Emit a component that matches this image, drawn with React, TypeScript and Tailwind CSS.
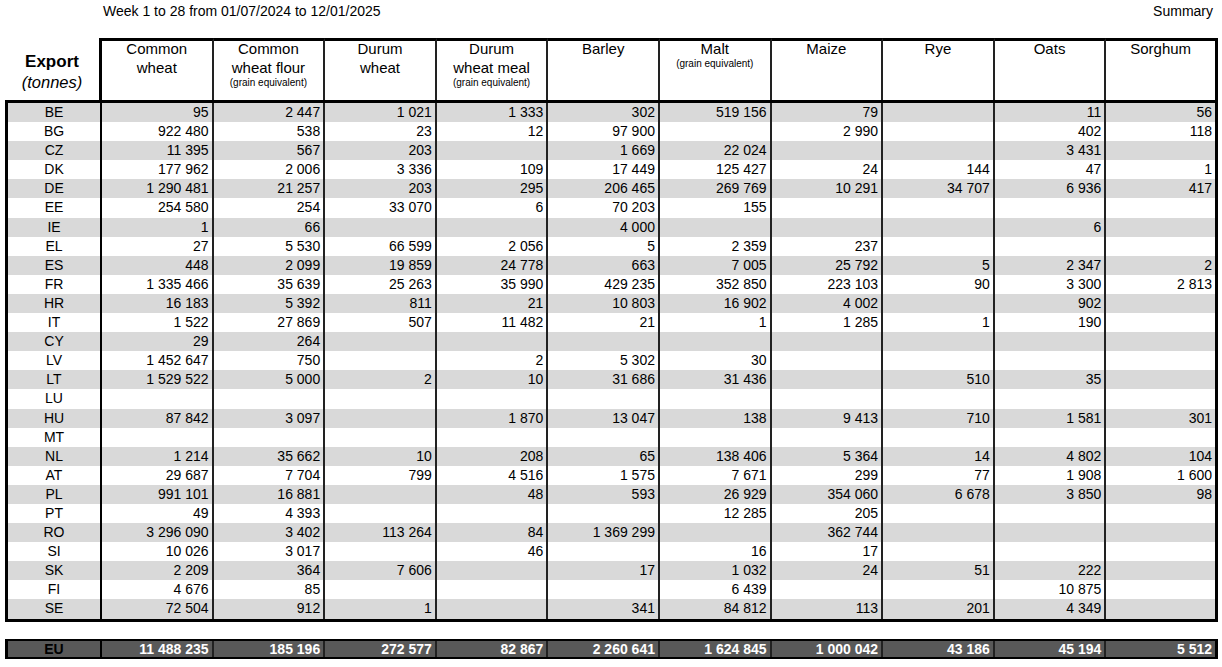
const COLS = [
  { title: ["Common", "wheat"], note: null },
  { title: ["Common", "wheat flour"], note: "(grain equivalent)" },
  { title: ["Durum", "wheat"], note: null },
  { title: ["Durum", "wheat meal"], note: "(grain equivalent)" },
  { title: ["Barley"], note: null },
  { title: ["Malt"], note: "(grain equivalent)" },
  { title: ["Maize"], note: null },
  { title: ["Rye"], note: null },
  { title: ["Oats"], note: null },
  { title: ["Sorghum"], note: null },
];

// country, then the ten columns in order
const ROWS: [string, string[]][] = [
  ["BE", ["95", "2 447", "1 021", "1 333", "302", "519 156", "79", "", "11", "56"]],
  ["BG", ["922 480", "538", "23", "12", "97 900", "", "2 990", "", "402", "118"]],
  ["CZ", ["11 395", "567", "203", "", "1 669", "22 024", "", "", "3 431", ""]],
  ["DK", ["177 962", "2 006", "3 336", "109", "17 449", "125 427", "24", "144", "47", "1"]],
  ["DE", ["1 290 481", "21 257", "203", "295", "206 465", "269 769", "10 291", "34 707", "6 936", "417"]],
  ["EE", ["254 580", "254", "33 070", "6", "70 203", "155", "", "", "", ""]],
  ["IE", ["1", "66", "", "", "4 000", "", "", "", "6", ""]],
  ["EL", ["27", "5 530", "66 599", "2 056", "5", "2 359", "237", "", "", ""]],
  ["ES", ["448", "2 099", "19 859", "24 778", "663", "7 005", "25 792", "5", "2 347", "2"]],
  ["FR", ["1 335 466", "35 639", "25 263", "35 990", "429 235", "352 850", "223 103", "90", "3 300", "2 813"]],
  ["HR", ["16 183", "5 392", "811", "21", "10 803", "16 902", "4 002", "", "902", ""]],
  ["IT", ["1 522", "27 869", "507", "11 482", "21", "1", "1 285", "1", "190", ""]],
  ["CY", ["29", "264", "", "", "", "", "", "", "", ""]],
  ["LV", ["1 452 647", "750", "", "2", "5 302", "30", "", "", "", ""]],
  ["LT", ["1 529 522", "5 000", "2", "10", "31 686", "31 436", "", "510", "35", ""]],
  ["LU", ["", "", "", "", "", "", "", "", "", ""]],
  ["HU", ["87 842", "3 097", "", "1 870", "13 047", "138", "9 413", "710", "1 581", "301"]],
  ["MT", ["", "", "", "", "", "", "", "", "", ""]],
  ["NL", ["1 214", "35 662", "10", "208", "65", "138 406", "5 364", "14", "4 802", "104"]],
  ["AT", ["29 687", "7 704", "799", "4 516", "1 575", "7 671", "299", "77", "1 908", "1 600"]],
  ["PL", ["991 101", "16 881", "", "48", "593", "26 929", "354 060", "6 678", "3 850", "98"]],
  ["PT", ["49", "4 393", "", "", "", "12 285", "205", "", "", ""]],
  ["RO", ["3 296 090", "3 402", "113 264", "84", "1 369 299", "", "362 744", "", "", ""]],
  ["SI", ["10 026", "3 017", "", "46", "", "16", "17", "", "", ""]],
  ["SK", ["2 209", "364", "7 606", "", "17", "1 032", "24", "51", "222", ""]],
  ["FI", ["4 676", "85", "", "", "", "6 439", "", "", "10 875", ""]],
  ["SE", ["72 504", "912", "1", "", "341", "84 812", "113", "201", "4 349", ""]],
];

const EU = ["11 488 235", "185 196", "272 577", "82 867", "2 260 641", "1 624 845", "1 000 042", "43 186", "45 194", "5 512"];

const GRID = "grid grid-cols-[97px_repeat(9,111.6px)_1fr] w-[1213px] ml-[5px]";

function HeaderRow() {
  return (
    <div className={`${GRID} h-[62px]`}>
      <div className="flex flex-col items-center pt-[14px] border-r-[3px] border-black">
        <span className="text-[17px] font-bold leading-[20px]">Export</span>
        <span className="text-[16.5px] italic leading-[20px]">(tonnes)</span>
      </div>
      {COLS.map((col, i) => (
        <div
          key={i}
          className={`border-t-[3px] border-black ${
            i === COLS.length - 1 ? "border-r-[3px]" : "border-r-2 border-r-[#222]"
          }`}
        >
          <div className="flex flex-col items-center text-center -mt-[2px]">
            {col.title.map((line) => (
              <span key={line} className="text-[15px] leading-[19px]">
                {line}
              </span>
            ))}
            {col.note && <span className="text-[10px] leading-[12px]">{col.note}</span>}
          </div>
        </div>
      ))}
    </div>
  );
}

function DataRow({ code, values, shaded }: { code: string; values: string[]; shaded: boolean }) {
  return (
    <div className={`${GRID} h-[19.1px] text-[14px] leading-[19.1px] ${shaded ? "bg-[#d9d9d9]" : "bg-white"}`}>
      <div className="text-center border-l-[3px] border-r-2 border-black">{code}</div>
      {values.map((v, i) => (
        <div
          key={i}
          className={`text-right pr-[3px] ${
            i === values.length - 1 ? "border-r-[3px] border-black" : "border-r-2 border-[#222]"
          }`}
        >
          {v}
        </div>
      ))}
    </div>
  );
}

export default function App() {
  return (
    <div
      className="w-[1222px] h-[667px] bg-white text-black overflow-hidden"
      style={{ fontFamily: '"Liberation Sans", Arial, sans-serif' }}
    >
      {/* titre */}
      <div className="h-[38px] flex justify-between pl-[103px] pr-[9px] pt-[1px] text-[14px] leading-[20px]">
        <span>Week 1 to 28 from 01/07/2024 to 12/01/2025</span>
        <span>Summary</span>
      </div>

      <HeaderRow />

      <div className="border-t-[3px] border-b-[3px] border-black w-[1213px] ml-[5px]">
        {ROWS.map(([code, values], i) => (
          <div key={code} className="-ml-[5px]">
            <DataRow code={code} values={values} shaded={i % 2 === 0} />
          </div>
        ))}
      </div>

      {/* total UE */}
      <div className={`${GRID} mt-[17px] h-[20px] bg-[#595959] border-y-2 border-black text-[14px] font-bold leading-[16px]`}>
        <div className="text-center text-black border-l-[3px] border-r-2 border-black">EU</div>
        {EU.map((v, i) => (
          <div
            key={i}
            className={`text-right pr-[3px] text-white ${
              i === EU.length - 1 ? "border-r-[3px] border-black" : "border-r-2 border-[#222]"
            }`}
          >
            {v}
          </div>
        ))}
      </div>
    </div>
  );
}
